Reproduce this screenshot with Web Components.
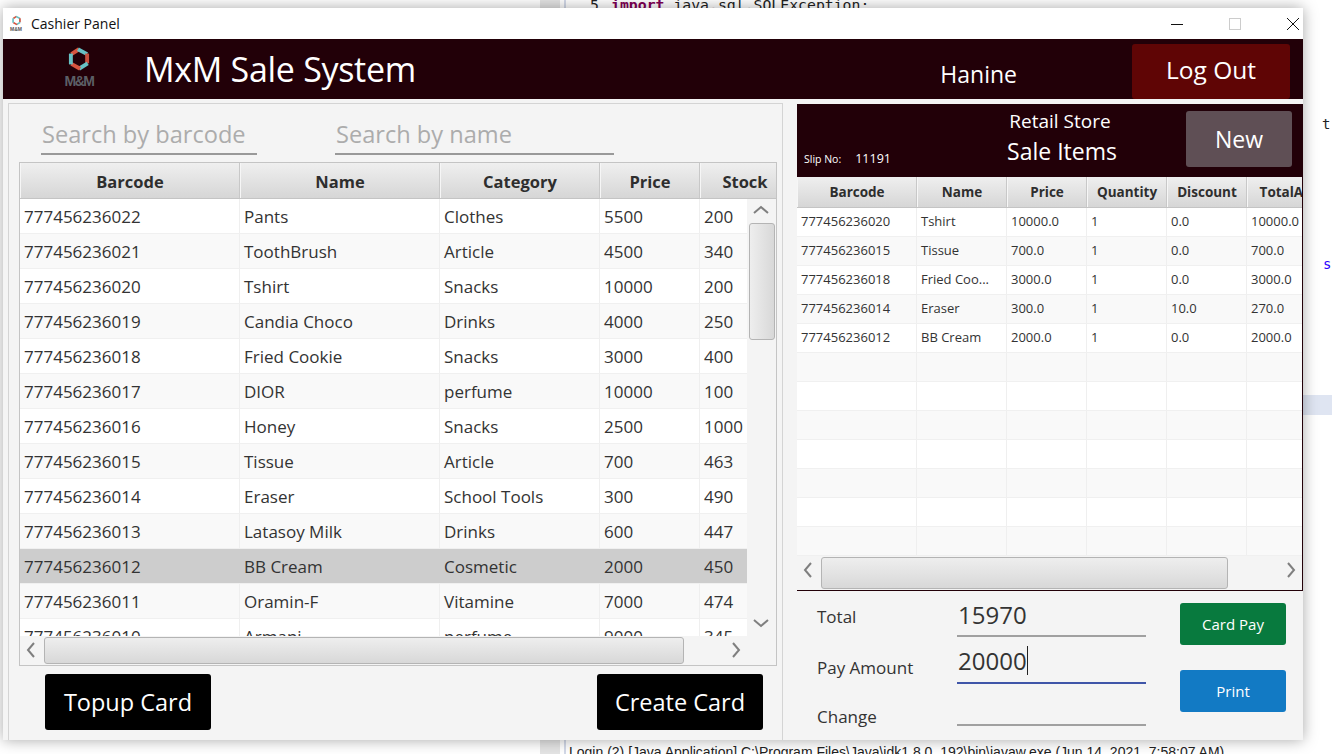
<!DOCTYPE html>
<html>
<head>
<meta charset="utf-8">
<title>Cashier Panel</title>
<style>
  html, body { margin: 0; padding: 0; background: #fff; }
  body { font-family: "Open Sans", "Noto Sans", sans-serif; overflow: hidden; }
</style>
</head>
<body>
<desk-top>
  <ide-backdrop></ide-backdrop>
  <app-window>
    <title-bar caption="Cashier Panel"></title-bar>
    <app-header></app-header>
    <div slot="left">
      <product-panel></product-panel>
    </div>
    <div slot="right">
      <sale-panel></sale-panel>
    </div>
  </app-window>
</desk-top>

<script>
// six edges of a hexagon, red and teal in turn
function logoSvg(size) {
  return `<svg width="${size}" height="${size}" viewBox="0 0 24 24" fill="none" stroke-width="3.6" style="display:block">
    <path d="M5 7.5 L12 3" stroke="#d8553f"/>
    <path d="M11 3 L19.5 7.5" stroke="#67c1c4"/>
    <path d="M19.5 7 L19.5 16" stroke="#c9503e"/>
    <path d="M20 16 L12 21" stroke="#67c1c4"/>
    <path d="M13 21 L5 16.5" stroke="#d8553f"/>
    <path d="M4.5 17 L4.5 7" stroke="#67c1c4"/>
  </svg>`;
}

class DeskTop extends HTMLElement {
  constructor() {
    super();
    this.attachShadow({ mode: 'open' }).innerHTML = `
      <style>
        :host { display: block; position: relative; width: 1332px; height: 754px; overflow: hidden; background: #fff; }
      </style>
      <slot></slot>`;
  }
}

// the eclipse window behind the app, only bits of it show
class IdeBackdrop extends HTMLElement {
  constructor() {
    super();
    this.attachShadow({ mode: 'open' }).innerHTML = `
      <style>
        :host { display: block; position: absolute; inset: 0; font: 14px "DejaVu Sans Mono", monospace; color: #222; }
        div { position: absolute; white-space: pre; }
        .strip { left: 540px; top: 0; width: 20px; height: 754px; background: #e4e4e4; }
        .edge { left: 564px; top: 0; width: 2px; height: 754px; background: #d3d9e8; }
        .code { left: 590px; top: -4px; font-size: 14.8px; }
        .code i { display: inline-block; width: 21px; font-style: normal; }
        .code b { color: #7f0055; }
        .t { left: 1322px; top: 116px; }
        .s { left: 1323px; top: 256px; color: #2a00ff; }
        .hl { left: 1303px; top: 395px; width: 29px; height: 20px; background: #dfe5f2; }
        .console { left: 569px; top: 744px; font: 14px "Liberation Sans", sans-serif; }
      </style>
      <div class="strip"></div>
      <div class="edge"></div>
      <div class="hl"></div>
      <div class="code"><i>5</i><b>import</b> java.sql.SQLException;</div>
      <div class="t">t</div>
      <div class="s">s</div>
      <div class="console">Login (2) [Java Application] C:\\Program Files\\Java\\jdk1.8.0_192\\bin\\javaw.exe (Jun 14, 2021, 7:58:07 AM)</div>`;
  }
}

class AppWindow extends HTMLElement {
  constructor() {
    super();
    this.attachShadow({ mode: 'open' }).innerHTML = `
      <style>
        :host { display: flex; flex-direction: column; position: absolute; left: 3px; top: 8px; width: 1300px; height: 732px;
                background: #f4f4f4; box-shadow: 0 0 14px rgba(0,0,0,.35); overflow: hidden; }
        .body { flex: 1; display: flex; min-height: 0; padding-left: 5px; padding-top: 4px; }
        .left { width: 775px; border: 1px solid #d4d4d4; border-bottom: 0; box-sizing: border-box; }
        .right { margin-left: 14px; width: 506px; padding-top: 1px; }
      </style>
      <slot></slot>
      <div class="body">
        <div class="left"><slot name="left"></slot></div>
        <div class="right"><slot name="right"></slot></div>
      </div>`;
  }
}

class TitleBar extends HTMLElement {
  constructor() {
    super();
    this.attachShadow({ mode: 'open' }).innerHTML = `
      <style>
        :host { display: flex; align-items: center; height: 31px; background: #fff; font: 14px "Open Sans", sans-serif; color: #111; }
        .ico { display: flex; flex-direction: column; align-items: center; width: 14px; margin: 0 8px 0 6px; font: bold 5px/6px "Liberation Sans", sans-serif; color: #555; }
        .cap { flex: 1; }
        .btns { display: flex; align-items: center; gap: 46px; padding-right: 4px; }
        svg { display: block; }
      </style>
      <span class="ico">${logoSvg(11)}<span>M&amp;M</span></span>
      <span class="cap">${this.getAttribute('caption')}</span>
      <div class="btns">
        <svg width="12" height="12"><path d="M0 6.5H12" stroke="#111"/></svg>
        <svg width="12" height="12"><rect x=".5" y=".5" width="11" height="11" fill="none" stroke="#ccc"/></svg>
        <svg width="12" height="12"><path d="M0 0L12 12M12 0L0 12" stroke="#111"/></svg>
      </div>`;
  }
}

class AppHeader extends HTMLElement {
  constructor() {
    super();
    this.attachShadow({ mode: 'open' }).innerHTML = `
      <style>
        :host { display: flex; align-items: center; height: 60px; background: #220008; color: #fff; }
        .logo { width: 34px; margin: -5px 0 0 59px; display: flex; flex-direction: column; align-items: center; font: bold 14px/13px "Liberation Sans", sans-serif; letter-spacing: -1.5px; color: #5c5f66; }
        .logo span { margin-top: 3px; }
        h1 { font: 400 34px "Open Sans", sans-serif; margin: 0 0 1px 48px; flex: 1; letter-spacing: -.3px; }
        .user { font-size: 23px; margin-top: 10px; margin-right: 115px; }
        .out { width: 158px; height: 55px; margin: 4px 13px 0 0; border-radius: 3px; background: #5f0505; font-size: 24.5px; line-height: 30px;
               display: flex; align-items: center; justify-content: center; padding-bottom: 2px; box-sizing: border-box; }
      </style>
      <div class="logo">${logoSvg(26)}<span>M&amp;M</span></div>
      <h1>MxM Sale System</h1>
      <span class="user">Hanine</span>
      <span class="out">Log Out</span>`;
  }
}

class SearchField extends HTMLElement {
  constructor() {
    super();
    this.attachShadow({ mode: 'open' }).innerHTML = `
      <style>
        :host { display: block; box-sizing: border-box; height: 38px; border-bottom: 2px solid #999; padding-left: 1px;
                color: #acacac; font-size: 23.6px; line-height: 34px; white-space: nowrap; }
      </style>
      <slot></slot>`;
  }
}

class ScrollBar extends HTMLElement {
  constructor() {
    super();
    const vertical = this.getAttribute('dir') === 'v';
    const start = this.getAttribute('start');
    const size = this.getAttribute('size');
    const chev = vertical ? ['M1 8L8 2L15 8', 'M1 2L8 8L15 2'] : ['M8 1L2 8L8 15', 'M2 1L8 8L2 15'];
    const vb = vertical ? 'width="16" height="10"' : 'width="10" height="16"';
    this.attachShadow({ mode: 'open' }).innerHTML = `
      <style>
        :host { display: block; position: relative; background: #f4f4f4; box-sizing: border-box; }
        svg { position: absolute; fill: none; stroke: #7f7f7f; stroke-width: 2; }
        .thumb { position: absolute; box-sizing: border-box; border: 1px solid #b4b4b4; border-radius: 3px;
                 background: linear-gradient(${vertical ? '90deg' : '180deg'}, #eee, #d8d8d8); }
      </style>
      ${vertical
        ? `<svg ${vb} style="left:6px;top:6px"><path d="${chev[0]}"/></svg>
           <div class="thumb" style="left:2px;right:1px;top:${start}px;height:${size}px"></div>
           <svg ${vb} style="left:6px;bottom:8px"><path d="${chev[1]}"/></svg>`
        : `<svg ${vb} style="left:6px;top:6px"><path d="${chev[0]}"/></svg>
           <div class="thumb" style="top:1px;bottom:1px;left:${start}px;width:${size}px"></div>
           <svg ${vb} style="right:6px;top:6px"><path d="${chev[1]}"/></svg>`}`;
  }
}

class DataTable extends HTMLElement {
  // cols = [[label, width]], rows = array of arrays, set before it goes in the dom
  setData(cols, rows, opts) {
    const tpl = cols.map(c => c[1] + 'px').join(' ');
    const head = cols.map(c => `<div class="th">${c[0]}</div>`).join('');
    const body = rows.map((r, i) => {
      const cls = 'row' + (i % 2 ? ' odd' : '') + (i === opts.selected ? ' sel' : '');
      return `<div class="${cls}">` + cols.map((c, j) => `<div class="td">${r[j] === undefined ? '' : r[j]}</div>`).join('') + '</div>';
    }).join('');
    this.attachShadow({ mode: 'open' }).innerHTML = `
      <style>
        :host { display: block; overflow: hidden; background: #fff; color: #333; }
        .head, .row { display: grid; grid-template-columns: ${tpl}; width: max-content; }
        .head { height: ${opts.headH}px; box-sizing: border-box; border-bottom: 1px solid #c4c4c4; }
        .th { background: linear-gradient(#efefef, #d6d6d6); border-right: 1px solid #c8c8c8; border-left: 1px solid #f6f6f6; box-sizing: border-box;
              font-weight: 700; font-size: ${opts.headFont}px; text-align: center; line-height: ${opts.headLine}px; overflow: hidden; white-space: nowrap; color: #2e2e2e; }
        .row { height: ${opts.rowH}px; box-sizing: border-box; border-bottom: 1px solid #f0f0f0; background: #fff; }
        .row.odd { background: #f9f9f9; }
        .row.sel { background: #cdcdcd; }
        .td { box-sizing: border-box; border-right: 1px solid #efefef; padding-left: 4px; font-size: ${opts.font}px;
              line-height: ${opts.rowLine}px; white-space: nowrap; overflow: hidden; }
        .sel .td { border-right-color: #cdcdcd; }
      </style>
      <div class="head">${head}</div>
      ${body}`;
  }
}

class ActionButton extends HTMLElement {
  constructor() {
    super();
    this.attachShadow({ mode: 'open' }).innerHTML = `
      <style>
        :host { display: flex; align-items: center; justify-content: center; border-radius: 3px; color: #fff; box-sizing: border-box; white-space: nowrap; }
      </style>
      <slot></slot>`;
  }
}

class ProductPanel extends HTMLElement {
  constructor() {
    super();
    this.attachShadow({ mode: 'open' }).innerHTML = `
      <style>
        :host { display: block; color: #333; }
        .search { display: flex; gap: 78px; padding: 13px 0 7px 32px; }
        .b { width: 216px; } .n { width: 279px; }
        .frame { margin-left: 10px; width: 758px; height: 504px; border: 1px solid #c4c4c4; box-sizing: border-box; display: grid;
                 grid-template-columns: 727px 29px; grid-template-rows: 473px 29px; background: #f4f4f4; }
        .top { grid-column: 1 / 3; grid-row: 1; position: relative; overflow: hidden; }
        data-table { height: 473px; width: 756px; }
        .vbar { position: absolute; right: 0; top: 36px; bottom: 0; width: 29px; }
        .hbar { grid-column: 1; grid-row: 2; }
        .foot { display: flex; justify-content: space-between; padding: 8px 19px 0 36px; }
        action-button { width: 166px; height: 56px; background: #000; font-size: 23.5px; }
      </style>
      <div class="search">
        <search-field class="b">Search by barcode</search-field>
        <search-field class="n">Search by name</search-field>
      </div>
      <div class="frame">
        <div class="top">
          <data-table id="t"></data-table>
          <scroll-bar class="vbar" dir="v" start="24" size="117"></scroll-bar>
        </div>
        <scroll-bar class="hbar" dir="h" start="24" size="640"></scroll-bar>
      </div>
      <div class="foot">
        <action-button>Topup Card</action-button>
        <action-button>Create Card</action-button>
      </div>`;
    const rows = [
      ['777456236022','Pants','Clothes','5500','200'],
      ['777456236021','ToothBrush','Article','4500','340'],
      ['777456236020','Tshirt','Snacks','10000','200'],
      ['777456236019','Candia Choco','Drinks','4000','250'],
      ['777456236018','Fried Cookie','Snacks','3000','400'],
      ['777456236017','DIOR','perfume','10000','100'],
      ['777456236016','Honey','Snacks','2500','1000'],
      ['777456236015','Tissue','Article','700','463'],
      ['777456236014','Eraser','School Tools','300','490'],
      ['777456236013','Latasoy Milk','Drinks','600','447'],
      ['777456236012','BB Cream','Cosmetic','2000','450'],
      ['777456236011','Oramin-F','Vitamine','7000','474'],
      ['777456236010','Armani','perfume','9000','345']
    ];
    this.shadowRoot.getElementById('t').setData(
      [['Barcode',220],['Name',200],['Category',160],['Price',100],['Stock',90]],
      rows, { headH: 36, headLine: 38, rowH: 35, rowLine: 36, font: 17, headFont: 16.5, selected: 10 });
  }
}

class SalePanel extends HTMLElement {
  constructor() {
    super();
    this.attachShadow({ mode: 'open' }).innerHTML = `
      <style>
        :host { display: block; color: #333; }
        .box { border-right: 1px solid #220008; border-bottom: 1px solid #220008; height: 487px; box-sizing: border-box; overflow: hidden; }
        .dark { height: 73px; background: #220008; color: #fff; position: relative; display: flex; flex-direction: column; align-items: center; padding-left: 22px; box-sizing: border-box; }
        .store { font-size: 19px; line-height: 24px; margin-top: 5px; margin-right: 1px; }
        .items { font-size: 23px; line-height: 32px; margin-top: 2px; margin-left: 3px; }
        .slip { position: absolute; left: 7px; bottom: 10px; font-size: 10.5px; line-height: 15px; display: flex; gap: 14px; align-items: baseline; }
        .slip b { font-weight: 400; font-size: 12.5px; }
        .new { position: absolute; right: 10px; top: 7px; width: 106px; height: 56px; background: #5f4f55; font-size: 23px; }
        data-table { height: 379px; }
        .hbar { height: 34px; }
        .pay { display: grid; grid-template-columns: 140px 189px 1fr; padding: 0 0 0 20px; }
        .lab { font-size: 17px; line-height: 24px; box-sizing: border-box; }
        .val { box-sizing: border-box; border-bottom: 2px solid #a0a0a0; font-size: 24px; padding-left: 1px; white-space: nowrap; }
        .focus { border-bottom-color: #3f55a8; }
        .caret { display: inline-block; width: 1px; height: 29px; background: #222; vertical-align: -5px; }
        .col { grid-column: 3; grid-row: 1 / 4; display: flex; flex-direction: column; gap: 25px; padding: 12px 0 0 34px; }
        .col action-button { width: 106px; height: 42px; font-size: 15px; }
      </style>
      <div class="box">
        <div class="dark">
          <span class="store">Retail Store</span>
          <span class="items">Sale Items</span>
          <span class="slip"><span>Slip No:</span><b>11191</b></span>
          <action-button class="new">New</action-button>
        </div>
        <data-table id="t"></data-table>
        <scroll-bar class="hbar" dir="h" start="24" size="407"></scroll-bar>
      </div>
      <div class="pay">
        <div class="lab" style="padding-top:14px;height:45px">Total</div>
        <div class="val" style="height:46px;line-height:48px">15970</div>
        <div class="col">
          <action-button style="background:#087a3e">Card Pay</action-button>
          <action-button style="background:#127ac4">Print</action-button>
        </div>
        <div class="lab" style="padding-top:19px;height:47px">Pay Amount</div>
        <div class="val focus" style="height:47px;line-height:48px">20000<span class="caret"></span></div>
        <div class="lab" style="padding-top:21px;height:42px">Change</div>
        <div class="val" style="height:42px"></div>
      </div>`;
    const rows = [
      ['777456236020','Tshirt','10000.0','1','0.0','10000.0'],
      ['777456236015','Tissue','700.0','1','0.0','700.0'],
      ['777456236018','Fried Coo...','3000.0','1','0.0','3000.0'],
      ['777456236014','Eraser','300.0','1','10.0','270.0'],
      ['777456236012','BB Cream','2000.0','1','0.0','2000.0'],
      [],[],[],[],[],[],[]
    ];
    this.shadowRoot.getElementById('t').setData(
      [['Barcode',120],['Name',90],['Price',80],['Quantity',80],['Discount',80],['TotalAmount',114]],
      rows, { headH: 31, headLine: 31, rowH: 29, rowLine: 26, font: 13, headFont: 13.5, selected: -1 });
  }
}

customElements.define('desk-top', DeskTop);
customElements.define('ide-backdrop', IdeBackdrop);
customElements.define('app-window', AppWindow);
customElements.define('title-bar', TitleBar);
customElements.define('app-header', AppHeader);
customElements.define('search-field', SearchField);
customElements.define('scroll-bar', ScrollBar);
customElements.define('data-table', DataTable);
customElements.define('action-button', ActionButton);
customElements.define('product-panel', ProductPanel);
customElements.define('sale-panel', SalePanel);
</script>
</body>
</html>
